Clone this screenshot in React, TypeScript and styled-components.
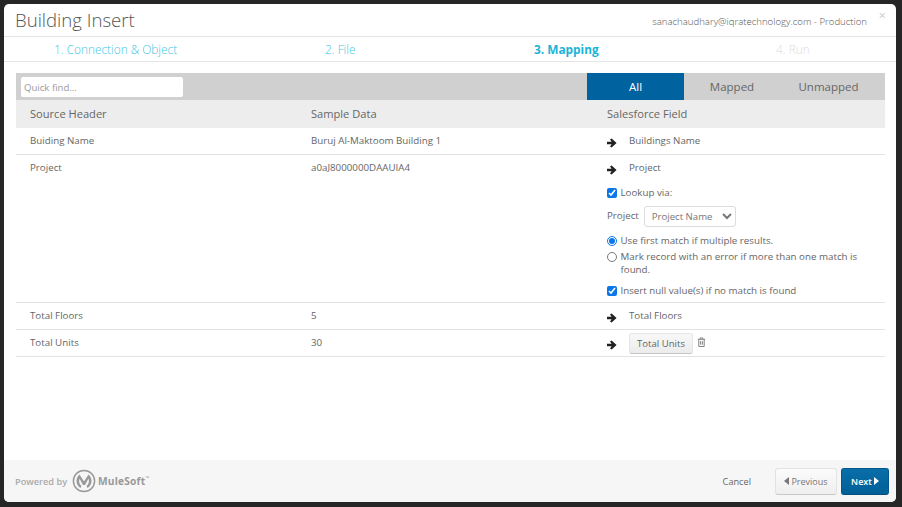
import React from 'react'
import styled, { createGlobalStyle } from 'styled-components'

const GlobalStyle = createGlobalStyle`
  html, body {
    margin: 0;
    padding: 0;
    height: 100%;
    background: #262626;
    overflow: hidden;
  }
  * { box-sizing: border-box; }
  body {
    font-family: "Open Sans", "Noto Sans", sans-serif;
    color: #666;
  }
`

const Backdrop = styled.div`
  width: 902px;
  height: 507px;
  padding: 4px 6px 5px 4px;
  background: #262626;
`

const Modal = styled.div`
  width: 892px;
  height: 498px;
  background: #fff;
  border-radius: 5px;
  display: flex;
  flex-direction: column;
  overflow: hidden;
`

const Header = styled.header`
  height: 32px;
  flex: none;
  display: flex;
  align-items: center;
  justify-content: space-between;
  padding: 0 5px 0 11px;
  position: relative;
`

const Title = styled.h1`
  margin: 0;
  font-size: 18.6px;
  font-weight: 300;
  line-height: 36px;
  color: #555;
`

const Account = styled.div`
  font-size: 9.6px;
  font-weight: 300;
  color: #555;
  margin-right: 24px;
  margin-top: 2px;
`

const CloseMark = styled.span`
  position: absolute;
  right: 10px;
  top: 2px;
  font-size: 13px;
  font-weight: 600;
  color: #d5d5d5;
`

const Steps = styled.nav`
  height: 26px;
  flex: none;
  display: grid;
  grid-template-columns: 271px 209px 242px 1fr;
  align-items: center;
  border-top: 1px solid #e4e4e4;
  border-bottom: 1px solid #e4e4e4;
  padding-left: 50px;
`

const Step = styled.span<{ $state: 'done' | 'active' | 'todo' }>`
  font-size: 11.85px;
  line-height: 22px;
  white-space: nowrap;
  font-weight: ${({ $state }) => ($state === 'active' ? 700 : 300)};
  color: ${({ $state }) =>
    $state === 'active' ? '#1bb3d6' : $state === 'done' ? '#3fc6df' : '#dcdcdc'};
`

const Body = styled.main`
  flex: 1;
  padding: 11px 11px 0 12px;
`

const Toolbar = styled.div`
  height: 27px;
  background: #d0d0d0;
  display: flex;
  justify-content: space-between;
  align-items: stretch;
`

const QuickFind = styled.input`
  width: 162px;
  height: 20px;
  margin: 4px 0 0 5px;
  padding: 0 3px;
  border: 0;
  border-radius: 2px;
  background: #fff;
  font: 400 9.6px "Open Sans", sans-serif;
  &::placeholder {
    color: #9a9a9a;
    opacity: 1;
  }
`

const Filters = styled.div`
  display: flex;
  padding-right: 8px;
`

const FilterTab = styled.div<{ $active?: boolean; $width: number }>`
  width: ${({ $width }) => $width}px;
  text-align: center;
  font-size: 11.5px;
  line-height: 28px;
  font-weight: 400;
  color: ${({ $active }) => ($active ? '#fff' : '#666')};
  background: ${({ $active }) => ($active ? '#00629f' : 'transparent')};
`

const Row = styled.div<{ $head?: boolean }>`
  display: grid;
  grid-template-columns: 281px 296px 1fr;
  padding-left: 14px;
  background: ${({ $head }) => ($head ? '#ededed' : '#fff')};
  border-bottom: ${({ $head }) => ($head ? '0' : '1px solid #e2e2e2')};
  font-size: ${({ $head }) => ($head ? '11.1px' : '9.75px')};
  line-height: ${({ $head }) => ($head ? '28px' : '26px')};
  color: #666;
`

const FieldCell = styled.div`
  display: flex;
  flex-wrap: wrap;
  align-items: flex-start;
`

const FieldLine = styled.div`
  display: flex;
  align-items: center;
  height: 26px;
`

const ArrowIcon = styled.svg`
  width: 10px;
  height: 10px;
  margin: 3px 12px 0 0;
  flex: none;
`

const Lookup = styled.div`
  width: 100%;
  padding: 5px 0;
  line-height: 13px;
`

const CheckLine = styled.label<{ $top?: number }>`
  display: flex;
  align-items: flex-start;
  gap: 4px;
  margin-top: ${({ $top }) => $top ?? 0}px;
`

const CheckBox = styled.input`
  width: 9.5px;
  height: 9.5px;
  margin: 2px 0 0 0;
  flex: none;
  accent-color: #0a76e8;
`

const SelectLine = styled.div`
  display: flex;
  align-items: flex-start;
  gap: 5px;
  margin: 7px 0;
`

const SelectLabel = styled.span`
  margin-top: 3px;
`

const ProjectSelect = styled.select`
  width: 92px;
  height: 21px;
  margin-top: 0;
  padding: 0 0 0 3px;
  font: 400 9.6px "Open Sans", sans-serif;
  color: #777;
  background: #fff;
  border: 1px solid #dcdcdc;
  border-radius: 3px;
`

const FieldButton = styled.button`
  height: 21px;
  width: 64px;
  padding: 0;
  font: 400 9.6px "Open Sans", sans-serif;
  color: #666;
  background: linear-gradient(#f8f8f8, #ececec);
  border: 1px solid #e6e6e6;
  border-bottom-color: #c4c4c4;
  border-radius: 3px;
`

const TrashIcon = styled.svg`
  width: 9px;
  height: 10px;
  margin: 0 0 2px 4px;
`

const Footer = styled.footer`
  height: 42px;
  flex: none;
  background: #f6f6f6;
  display: flex;
  align-items: center;
  justify-content: space-between;
  padding: 0 7px 0 11px;
`

const PoweredBy = styled.div`
  display: flex;
  align-items: center;
  gap: 5px;
  color: #aaa;
  font-size: 9.2px;
  font-family: "Open Sans", sans-serif;
  font-weight: 600;
`

const MuleName = styled.span`
  font-size: 10.2px;
  font-weight: 700;
  color: #999;
  letter-spacing: 0.2px;
  margin-left: -3px;
`

const Tm = styled.sup`
  font-size: 5px;
  font-weight: 400;
  vertical-align: 5px;
  line-height: 0;
`

const Actions = styled.div`
  display: flex;
  align-items: center;
`

const CancelLink = styled.a`
  font-size: 9.2px;
  color: #666;
  margin-right: 24px;
`

const NavButton = styled.button<{ $primary?: boolean }>`
  height: 27px;
  width: ${({ $primary }) => ($primary ? '48px' : '62px')};
  margin-left: ${({ $primary }) => ($primary ? '4px' : '0')};
  padding: 0;
  display: flex;
  align-items: center;
  justify-content: center;
  gap: 2px;
  font: ${({ $primary }) => ($primary ? 600 : 400)} 9px "Open Sans", sans-serif;
  color: ${({ $primary }) => ($primary ? '#fff' : '#777')};
  background: ${({ $primary }) =>
    $primary ? 'linear-gradient(#0a6ea8, #005f97)' : 'linear-gradient(#fbfbfb, #efefef)'};
  border: 1px solid ${({ $primary }) => ($primary ? '#00588c' : '#e2e2e2')};
  border-bottom-color: ${({ $primary }) => ($primary ? '#004f7f' : '#c8c8c8')};
  border-radius: 3px;
`

const Caret = styled.svg`
  width: 5px;
  height: 8px;
  fill: currentColor;
`

const Arrow = () => (
  <ArrowIcon viewBox="0 0 10 10">
    <path d="M0 3.8h4.6L3 1.6 4.6 0.6 9.6 5 4.6 9.4 3 8.4l1.6-2.2H0z" fill="#222" />
  </ArrowIcon>
)

const Trash = () => (
  <TrashIcon viewBox="0 0 10 11" fill="none" stroke="#777" strokeWidth="1">
    <path d="M1 2.5h8M3.5 2.3V1h3v1.3M2 2.5v8h6v-8M4 4.5v4M6 4.5v4" />
  </TrashIcon>
)

const MuleLogo = () => (
  <svg width="24" height="24" viewBox="0 0 24 24" fill="none">
    <circle cx="12" cy="12" r="10.6" stroke="#999" strokeWidth="1.5" />
    <path d="M7.5 5.5c-2 1.7-3 4-3 6.5 0 3 1.6 5.6 4 7l1-2.2c-1.500-1-2.400-2.800-2.400-4.800 0-.8.200-1.600.500-2.200L11 16h2l3.400-6.200c.3.700.5 1.400.5 2.200 0 2-.9 3.800-2.400 4.800l1 2.200c2.400-1.400 4-4 4-7 0-2.500-1-4.800-3-6.500L12 12.500z" fill="#999" />
  </svg>
)

export default function App() {
  return (
    <Backdrop>
      <GlobalStyle />
      <Modal>
        <Header>
          <Title>Building Insert</Title>
          <Account>sanachaudhary@iqratechnology.com - Production</Account>
          <CloseMark>×</CloseMark>
        </Header>
        <Steps>
          <Step $state="done">1. Connection &amp; Object</Step>
          <Step $state="done">2. File</Step>
          <Step $state="active">3. Mapping</Step>
          <Step $state="todo">4. Run</Step>
        </Steps>
        <Body>
          <Toolbar>
            <QuickFind placeholder="Quick find..." />
            <Filters>
              <FilterTab $active $width={97}>All</FilterTab>
              <FilterTab $width={96}>Mapped</FilterTab>
              <FilterTab $width={97}>Unmapped</FilterTab>
            </Filters>
          </Toolbar>
          <Row $head>
            <span>Source Header</span>
            <span>Sample Data</span>
            <span>Salesforce Field</span>
          </Row>
          <Row>
            <span>Buiding Name</span>
            <span>Buruj Al-Maktoom Building 1</span>
            <FieldLine>
              <Arrow />
              <span>Buildings Name</span>
            </FieldLine>
          </Row>
          <Row>
            <span>Project</span>
            <span>a0aJ8000000DAAUIA4</span>
            <FieldCell>
              <FieldLine>
                <Arrow />
                <span>Project</span>
              </FieldLine>
              <Lookup>
                <CheckLine>
                  <CheckBox type="checkbox" defaultChecked />
                  Lookup via:
                </CheckLine>
                <SelectLine>
                  <SelectLabel>Project</SelectLabel>
                  <ProjectSelect defaultValue="name">
                    <option value="name">Project Name</option>
                  </ProjectSelect>
                </SelectLine>
                <CheckLine>
                  <CheckBox type="radio" name="match" defaultChecked />
                  Use first match if multiple results.
                </CheckLine>
                <CheckLine $top={3}>
                  <CheckBox type="radio" name="match" />
                  <span>Mark record with an error if more than one match is found.</span>
                </CheckLine>
                <CheckLine $top={8}>
                  <CheckBox type="checkbox" defaultChecked />
                  Insert null value(s) if no match is found
                </CheckLine>
              </Lookup>
            </FieldCell>
          </Row>
          <Row>
            <span>Total Floors</span>
            <span>5</span>
            <FieldLine>
              <Arrow />
              <span>Total Floors</span>
            </FieldLine>
          </Row>
          <Row>
            <span>Total Units</span>
            <span>30</span>
            <FieldLine>
              <Arrow />
              <FieldButton>Total Units</FieldButton>
              <Trash />
            </FieldLine>
          </Row>
        </Body>
        <Footer>
          <PoweredBy>
            Powered by
            <MuleLogo />
            <MuleName>
              MuleSoft<Tm>™</Tm>
            </MuleName>
          </PoweredBy>
          <Actions>
            <CancelLink>Cancel</CancelLink>
            <NavButton>
              <Caret viewBox="0 0 5 8"><path d="M5 0v8L0 4z" /></Caret>
              Previous
            </NavButton>
            <NavButton $primary>
              Next
              <Caret viewBox="0 0 5 8"><path d="M0 0v8l5-4z" /></Caret>
            </NavButton>
          </Actions>
        </Footer>
      </Modal>
    </Backdrop>
  )
}
